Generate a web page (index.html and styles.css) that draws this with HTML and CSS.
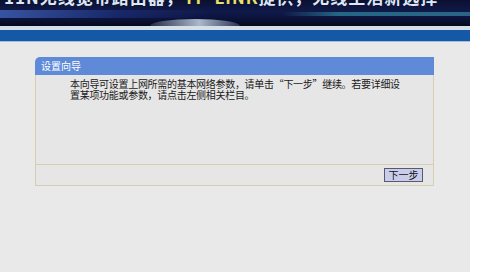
FILE: index.html
```html
<!DOCTYPE html>
<html lang="zh">
<head>
<meta charset="utf-8">
<link rel="stylesheet" href="styles.css">
</head>
<body>
<div class="page">
  <header class="banner">
    <div class="banner-text">11N无线宽带路由器，<span class="hl">TP-LINK</span>提供，无线生活新选择</div>
    <div class="swirl"></div>
  </header>
  <div class="gap-line"></div>
  <div class="navbar"></div>
  <main class="content">
    <section class="panel">
      <div class="panel-title">设置向导</div>
      <div class="panel-body">
        <p>本向导可设置上网所需的基本网络参数，请单击“下一步”继续。若要详细设置某项功能或参数，请点击左侧相关栏目。</p>
      </div>
      <div class="panel-foot">
        <button class="btn">下一步</button>
      </div>
    </section>
  </main>
</div>
</body>
</html>
```

FILE: styles.css
```css
html, body {
  margin: 0;
  padding: 0;
  background: #ffffff;
  height: 100%;
}
body {
  font-family: "Noto Sans CJK SC", "Liberation Sans", sans-serif;
  overflow: hidden;
}
.page {
  width: 470px;
  height: 272px;
  display: flex;
  flex-direction: column;
  background: #e9e9e9;
}
.banner {
  height: 26px;
  position: relative;
  overflow: hidden;
  background:
    linear-gradient(90deg, rgba(0,0,0,0) 0%, rgba(0,0,0,0) 60%, rgba(40,110,140,0.9) 72%, rgba(50,120,150,0.8) 100%) 0 12px / 100% 4px no-repeat,
    linear-gradient(90deg, rgba(60,90,170,0.9) 0%, rgba(30,50,130,0.6) 25%, rgba(10,20,60,0) 45%) 0 10px / 100% 8px no-repeat,
    linear-gradient(180deg, #0b1030 0%, #101a4a 45%, #0a1238 75%, #05081c 100%);
}
.swirl {
  position: absolute;
  left: 150px;
  top: 19px;
  width: 90px;
  height: 14px;
  border-radius: 50% 50% 0 0;
  background: linear-gradient(90deg, rgba(150,170,200,0.2), rgba(200,215,230,0.85) 55%, rgba(120,140,180,0.3));
}
.banner-text {
  position: absolute;
  left: 4px;
  top: -16px;
  font-size: 17px;
  font-weight: bold;
  color: #dfe6f4;
  white-space: nowrap;
  letter-spacing: 1px;
}
.banner-text .hl {
  color: #e8e06a;
}
.gap-line {
  height: 4px;
  background: #d4dfe9;
}
.navbar {
  height: 11px;
  background: #1559a6;
  border-bottom: 1px solid #9ec0e2;
}
.content {
  flex: 1;
  padding: 15px 36px 0 35px;
}
.panel {
  width: 399px;
}
.panel-title {
  height: 18px;
  line-height: 18px;
  background: #5e8ad8;
  color: #ffffff;
  font-size: 10px;
  padding-left: 6px;
  border-radius: 5px 0 0 0;
}
.panel-body {
  height: 86px;
  border-left: 1px solid #d6ceb0;
  border-right: 1px solid #d6ceb0;
  border-bottom: 1px solid #d6ceb0;
  background: #e6e6e6;
  padding: 3px 33px 0 34px;
}
.panel-body p {
  margin: 0;
  font-size: 10px;
  line-height: 11px;
  letter-spacing: -0.3px;
  color: #1a1a1a;
}
.panel-foot {
  height: 20px;
  border-left: 1px solid #d6ceb0;
  border-right: 1px solid #d6ceb0;
  border-bottom: 1px solid #d6ceb0;
  background: #e6e6e6;
  display: flex;
  justify-content: flex-end;
  align-items: center;
  padding-right: 10px;
}
.btn {
  width: 39px;
  height: 14px;
  padding: 0;
  margin: 0;
  border: 1px solid #555a70;
  background: #c9cde9;
  color: #111111;
  font-family: "Noto Sans CJK SC", sans-serif;
  font-size: 10px;
  line-height: 12px;
  cursor: pointer;
}
```
